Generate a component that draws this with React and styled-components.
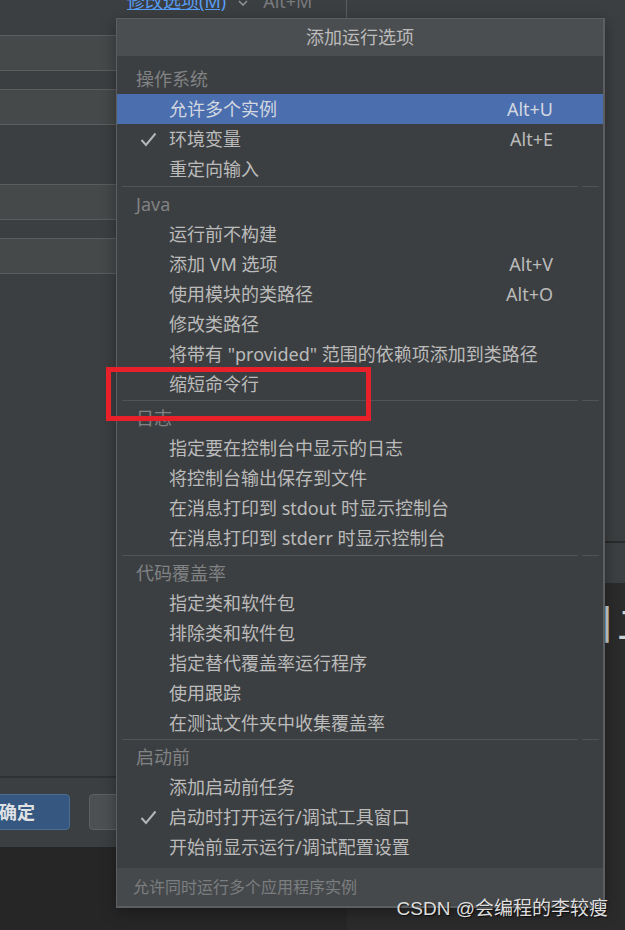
import React from "react";
import styled, { createGlobalStyle } from "styled-components";

const UI = `"Noto Sans", "Noto Sans CJK SC", sans-serif`;

const GlobalStyle = createGlobalStyle`
  html, body { margin: 0; padding: 0; background: #262626; }
  body { font-family: ${UI}; }
`;

const sections = [
  {
    title: "操作系统",
    items: [
      { label: "允许多个实例", keys: "Alt+U", active: true },
      { label: "环境变量", keys: "Alt+E", checked: true },
      { label: "重定向输入" },
    ],
  },
  {
    title: "Java",
    items: [
      { label: "运行前不构建" },
      { label: "添加 VM 选项", keys: "Alt+V" },
      { label: "使用模块的类路径", keys: "Alt+O" },
      { label: "修改类路径" },
      { label: '将带有 "provided" 范围的依赖项添加到类路径' },
      { label: "缩短命令行" },
    ],
  },
  {
    title: "日志",
    items: [
      { label: "指定要在控制台中显示的日志" },
      { label: "将控制台输出保存到文件" },
      { label: "在消息打印到 stdout 时显示控制台" },
      { label: "在消息打印到 stderr 时显示控制台" },
    ],
  },
  {
    title: "代码覆盖率",
    items: [
      { label: "指定类和软件包" },
      { label: "排除类和软件包" },
      { label: "指定替代覆盖率运行程序" },
      { label: "使用跟踪" },
      { label: "在测试文件夹中收集覆盖率" },
    ],
  },
  {
    title: "启动前",
    items: [
      { label: "添加启动前任务" },
      { label: "启动时打开运行/调试工具窗口", checked: true },
      { label: "开始前显示运行/调试配置设置" },
    ],
  },
];

// field gaps (px above each text field) in the dialog behind the popup
const fieldGaps = [0, 18, 59, 18];

export default function App() {
  return (
    <>
      <GlobalStyle />
      <Screen>
        <Dialog>
          <DialogTop>
            <OptionsLink>修改选项(M)</OptionsLink>
            <Chevron width="10" height="8" viewBox="0 0 10 8">
              <polyline points="1,1 5,5 9,1" fill="none" stroke="#8c8e90" strokeWidth="1.6" />
            </Chevron>
            <HintKey>Alt+M</HintKey>
          </DialogTop>
          {fieldGaps.map((g, i) => (
            <Field key={i} $gap={g} />
          ))}
          <Fill />
          <ButtonBar>
            <Button $primary>确定</Button>
            <Button>取消</Button>
            <Button>应用</Button>
          </ButtonBar>
        </Dialog>

        <Ide>
          <ToolPanel />
          <TabStrip />
          <Editor>丨二</Editor>
        </Ide>

        <Popup>
          <PopupTitle>添加运行选项</PopupTitle>
          <PopupBody>
            {sections.map((s, si) => (
              <React.Fragment key={s.title}>
                {si > 0 && (
                  <Separator>
                    <SepLine $grow />
                    <SepLine />
                  </Separator>
                )}
                <GroupHeader>{s.title}</GroupHeader>
                {s.items.map((it) => (
                  <Row key={it.label} $active={it.active}>
                    <CheckCell>
                      {it.checked && (
                        <svg width="17" height="15" viewBox="0 0 17 15">
                          <polyline
                            points="1.5,8 6,13 15.5,1.5"
                            fill="none"
                            stroke="#b4b6b8"
                            strokeWidth="2"
                          />
                        </svg>
                      )}
                    </CheckCell>
                    <span>{it.label}</span>
                    <Keys>{it.keys}</Keys>
                  </Row>
                ))}
              </React.Fragment>
            ))}
          </PopupBody>
          <PopupFooter>允许同时运行多个应用程序实例</PopupFooter>
        </Popup>

        <RedBox />
        <Watermark>CSDN @会编程的李较瘦</Watermark>
      </Screen>
    </>
  );
}

const Screen = styled.div`
  position: relative;
  width: 625px;
  height: 930px;
  overflow: hidden;
  background: #262626;
  display: flex;
  align-items: flex-start;
`;

const Dialog = styled.div`
  width: 347px;
  height: 847px;
  flex-shrink: 0;
  box-sizing: border-box;
  display: flex;
  flex-direction: column;
  background: #3c3f41;
  border-right: 1px solid #5b5e60;
  overflow: hidden;
`;

const DialogTop = styled.div`
  height: 35px;
  flex-shrink: 0;
  display: flex;
  align-items: flex-start;
  padding-left: 127px;
  font-size: 18px;
  line-height: 20px;
`;

const OptionsLink = styled.span`
  color: #589df6;
  text-decoration: underline;
  margin-top: -9px;
`;

const Chevron = styled.svg`
  margin: 0 0 0 12px;
`;

const HintKey = styled.span`
  color: #787a7c;
  margin: -9px 0 0 15px;
`;

const Field = styled.div`
  height: 36px;
  flex-shrink: 0;
  box-sizing: border-box;
  margin: ${({ $gap }) => $gap}px 20px 0 -4px;
  background: #45494a;
  border: 1px solid #5a5d5f;
`;

const Fill = styled.div`
  flex: 1;
`;

const ButtonBar = styled.div`
  height: 71px;
  flex-shrink: 0;
  box-sizing: border-box;
  border-top: 2px solid #2f3133;
  display: flex;
  justify-content: flex-end;
  align-items: flex-start;
  gap: 19px;
  padding: 16px 26px 0 0;
`;

const Button = styled.div`
  width: 106px;
  height: 36px;
  flex-shrink: 0;
  box-sizing: border-box;
  border-radius: 4px;
  border: 1px solid ${({ $primary }) => ($primary ? "#4b6d93" : "#5e6163")};
  background: ${({ $primary }) => ($primary ? "#365880" : "#4c5052")};
  color: #dfe1e5;
  font-weight: 700;
  font-size: 18px;
  line-height: 34px;
  text-align: center;
`;

const Ide = styled.div`
  flex: 1;
  height: 930px;
  display: flex;
  flex-direction: column;
`;

const ToolPanel = styled.div`
  height: 541px;
  flex-shrink: 0;
  background: #3c3f41;
`;

const TabStrip = styled.div`
  height: 42px;
  flex-shrink: 0;
  box-sizing: border-box;
  border-top: 2px solid #2b2b2b;
  background: #3d4042;
`;

const Editor = styled.div`
  flex: 1;
  background: #2b2b2b;
  padding: 19px 0 0 240px;
  color: #cfd1d3;
  font-family: "Noto Sans CJK SC", sans-serif;
  font-size: 40px;
  line-height: 40px;
  letter-spacing: -10px;
  white-space: nowrap;
`;

const Popup = styled.div`
  position: absolute;
  left: 116px;
  top: 18px;
  width: 489px;
  box-sizing: border-box;
  background: #3c3f41;
  border: 1px solid #5c5f61;
  border-right-width: 2px;
  border-bottom-width: 2px;
  box-shadow: 0 4px 14px rgba(0, 0, 0, 0.35);
  color: #bbbbbb;
  font-size: 18px;
`;

const PopupTitle = styled.div`
  height: 37px;
  line-height: 36px;
  background: #4b4e50;
  text-align: center;
  color: #bbbbbb;
`;

const PopupBody = styled.div`
  padding: 8px 0 6px;
`;

const GroupHeader = styled.div`
  height: 30px;
  line-height: 30px;
  padding-left: 19px;
  color: #808284;
`;

const Row = styled.div`
  height: 30px;
  line-height: 30px;
  display: grid;
  grid-template-columns: 52px 1fr auto;
  align-items: center;
  padding-right: 50px;
  white-space: nowrap;
  background: ${({ $active }) => ($active ? "#4b6eaf" : "transparent")};
  color: ${({ $active }) => ($active ? "#d3d8e0" : "#bbbbbb")};
`;

const CheckCell = styled.div`
  display: flex;
  align-items: center;
  padding-left: 23px;
  height: 30px;
`;

const Keys = styled.span`
  color: inherit;
`;

const Separator = styled.div`
  height: 4.5px;
  display: flex;
  align-items: center;
  gap: 4px;
  padding: 0 4px 0 5px;
`;

const SepLine = styled.div`
  height: 1px;
  background: #515456;
  flex: ${({ $grow }) => ($grow ? "1" : "0 0 17px")};
`;

const PopupFooter = styled.div`
  height: 38px;
  line-height: 39px;
  background: #46494b;
  padding-left: 16px;
  font-size: 16px;
  color: #7b7e80;
`;

const RedBox = styled.div`
  position: absolute;
  left: 106px;
  top: 367px;
  width: 265px;
  height: 54px;
  box-sizing: border-box;
  border: 5px solid #e8202a;
`;

const Watermark = styled.div`
  position: absolute;
  right: 17px;
  bottom: 10px;
  font-family: "Liberation Sans", "Noto Sans CJK SC", sans-serif;
  font-size: 19px;
  line-height: 22px;
  color: #dedede;
  text-shadow: 1px 1px 1px rgba(0, 0, 0, 0.7);
  white-space: nowrap;
`;
